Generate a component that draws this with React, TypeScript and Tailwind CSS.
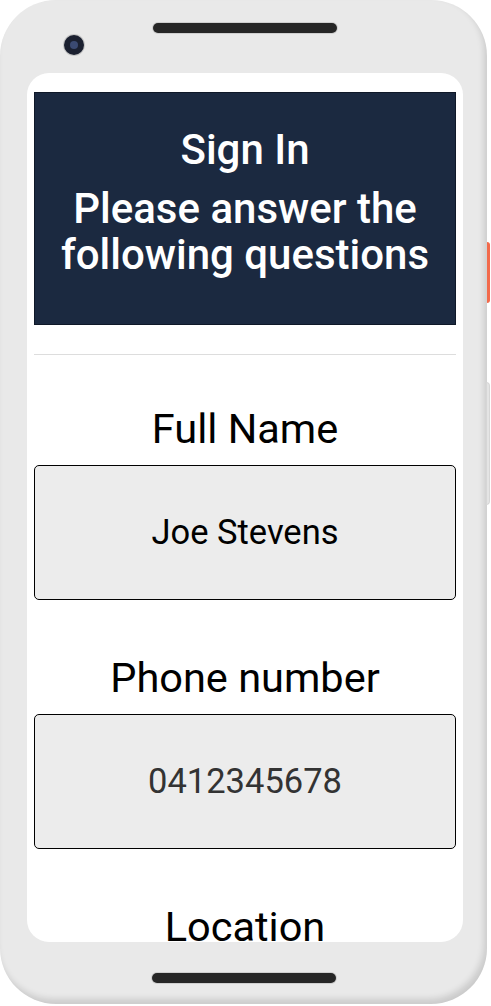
const Field = ({ label, value, valueClass }: { label: string; value: string; valueClass: string }) => (
  <div className="flex flex-col items-center">
    <h2 className="text-[41.5px] leading-[48px] text-black">{label}</h2>
    <div className="mt-3 w-full h-[135px] flex items-center justify-center bg-[#ececec] border-[1.5px] border-black rounded-[5px]">
      <span className={"text-[34.5px] leading-[41px] " + valueClass}>{value}</span>
    </div>
  </div>
);

export default function App() {
  return (
    <div className="w-[491px] h-[1006px] bg-white overflow-hidden font-['Roboto','Liberation_Sans',sans-serif]">
      <div className="relative w-[487px] h-[1004px] rounded-[56px] bg-[#e9e9e9] shadow-[inset_-3px_-5px_6px_rgba(0,0,0,0.13)] flex flex-col">
        {/* side buttons */}
        <div className="absolute left-[487px] top-[242px] w-[3px] h-[61px] bg-[#f26a4b] rounded-r-sm" />
        <div className="absolute left-[486px] top-[382px] w-[4px] h-[123px] bg-[#e4e4e4] border border-[#d6d6d6] rounded-r-sm" />

        {/* top bezel */}
        <div className="absolute left-[64px] top-[35px] w-[20px] h-[20px] rounded-full bg-[#1b2030] flex items-center justify-center shadow-[0_0_0_1px_rgba(0,0,0,0.15)]">
          <div className="w-[8px] h-[8px] rounded-full bg-[#3b4a72]" />
        </div>
        <div className="h-[73px] flex justify-center">
          <div className="mt-[23px] ml-[3px] w-[184px] h-[10px] rounded-full bg-[#262626] shadow-[0_0_0_1px_#cfcfcf]" />
        </div>

        {/* screen */}
        <div className="ml-[27px] mr-[24px] h-[869px] bg-white rounded-[22px] overflow-hidden px-[7px] pt-[19px]">
          <div className="h-[233px] bg-[#1b2940] border border-[#0f1828] flex flex-col items-center pt-[35px] text-white font-medium text-center">
            <h1 className="text-[42px] leading-[44px]">Sign In</h1>
            <p className="mt-[14px] text-[42px] leading-[46px]">
              Please answer the
              <br />
              following questions
            </p>
          </div>

          <div className="mt-[29px] h-px bg-[#dddddd]" />

          <div className="mt-[50px] flex flex-col gap-[54px]">
            <Field label="Full Name" value="Joe Stevens" valueClass="text-black" />
            <Field label="Phone number" value="0412345678" valueClass="text-[#333333]" />
            <Field label="Location" value="" valueClass="text-black" />
          </div>
        </div>

        {/* bottom bezel */}
        <div className="flex justify-center">
          <div className="mt-[31px] w-[184px] h-[10px] rounded-full bg-[#262626] shadow-[0_0_0_1px_#cfcfcf]" />
        </div>
      </div>
    </div>
  );
}
